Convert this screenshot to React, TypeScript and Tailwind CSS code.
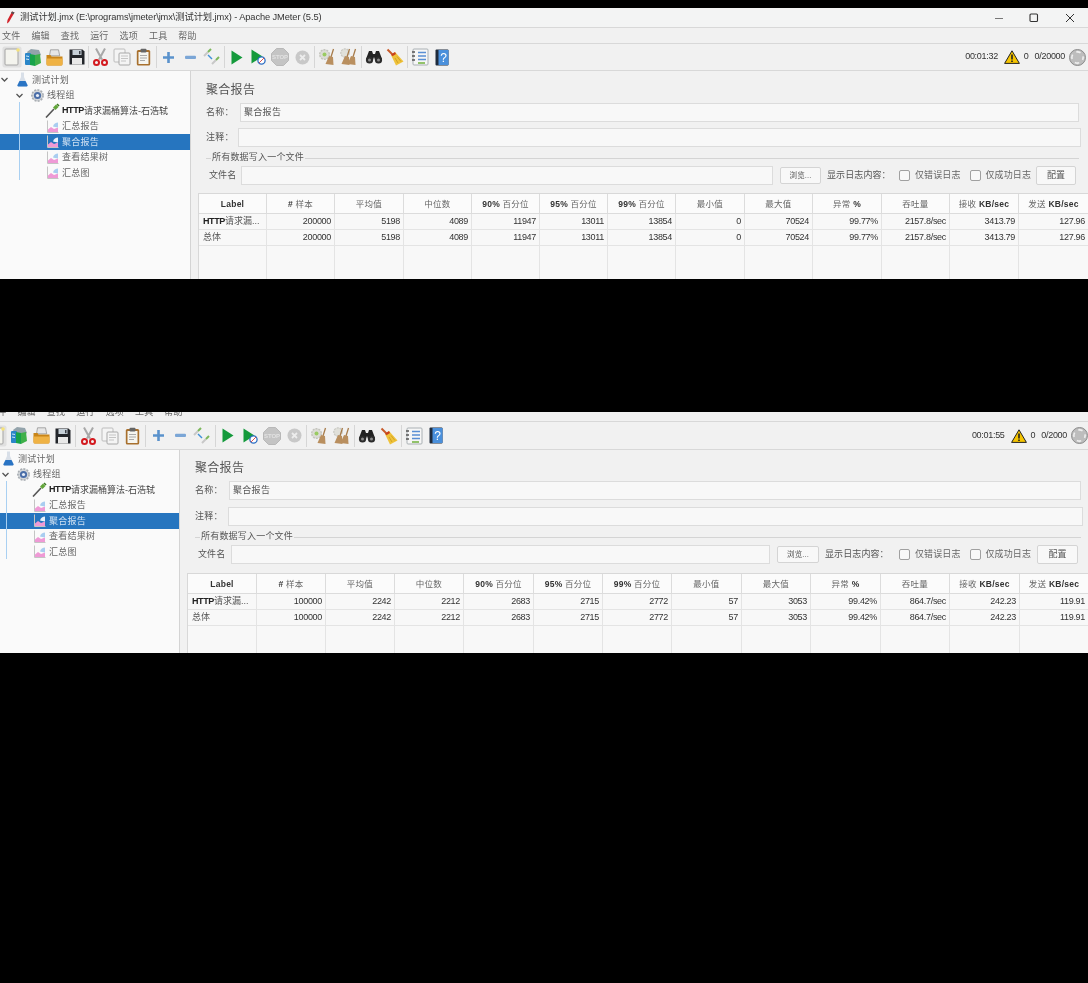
import type { ReactNode } from "react";

const cjk = { fontFamily: '"Liberation Sans", "Noto Sans CJK SC", sans-serif' };

const headers = ["Label", "# 样本", "平均值", "中位数", "90% 百分位", "95% 百分位", "99% 百分位", "最小值", "最大值", "异常 %", "吞吐量", "接收 KB/sec", "发送 KB/sec"];

function Bold({ text }: { text: string }) {
  // latin parts of the header are bold, the chinese parts are not
  return (
    <span>
      {text.split(/([\x21-\x7e]+)/).map((part, i) =>
        /[\x21-\x7e]/.test(part) ? <b key={i} className="font-bold text-[#333]">{part}</b> : <span key={i}>{part}</span>
      )}
    </span>
  );
}

function NewIcon() {
  return (
    <svg width="20" height="22" viewBox="0 0 20 22">
      <rect x="0.5" y="0.5" width="19" height="21" rx="2" fill="#e0e0e0" />
      <rect x="3" y="3" width="13" height="16" rx="1" fill="#f4f4ee" stroke="#a4a4a4" strokeWidth="1" />
      <circle cx="16" cy="4" r="1.8" fill="#f5e27a" />
    </svg>
  );
}
function TemplatesIcon() {
  return (
    <svg width="18" height="19" viewBox="0 0 18 19">
      <path d="M3 4l4-3 8 1 2 5-4 2-8-1z" fill="#93a3ab" />
      <rect x="1" y="5" width="6" height="12" rx="1" fill="#2a86c8" />
      <path d="M6 6l5 1v11l-5-1z" fill="#17a34a" />
      <path d="M11 7l5-1 1 9-6 3z" fill="#3fb04a" />
      <path d="M2 8l3 .5M2 11l3 .5" stroke="#cde7f7" />
    </svg>
  );
}
function OpenIcon() {
  return (
    <svg width="17" height="17" viewBox="0 0 17 17">
      <path d="M4.5 0.8h8l1.2 6H3.5z" fill="#e6e6e6" stroke="#8a8a8a" strokeWidth="0.7" />
      <path d="M0.5 6h4l1 1.5h11V15a1.5 1.5 0 0 1-1.5 1.5H2A1.5 1.5 0 0 1 .5 15z" fill="#c98518" />
      <path d="M0.5 9.5h16V15a1.5 1.5 0 0 1-1.5 1.5H2A1.5 1.5 0 0 1 .5 15z" fill="#efb244" />
    </svg>
  );
}
function SaveIcon() {
  return (
    <svg width="16" height="16" viewBox="0 0 16 16">
      <path d="M0.5 0.5h13l2 2v13H.5z" fill="#22252a" />
      <rect x="3.5" y="1" width="9" height="5" fill="#c6d0d8" />
      <rect x="3" y="9" width="10" height="6.5" fill="#e8e8e8" />
      <rect x="10" y="2" width="1.5" height="3.2" fill="#3a3f46" />
    </svg>
  );
}
function CutIcon() {
  return (
    <svg width="15" height="18" viewBox="0 0 15 18">
      <path d="M3 0.5l6 11M12 0.5L6 11.5" stroke="#a8a8a8" strokeWidth="2" />
      <circle cx="3.5" cy="14.5" r="2.5" fill="none" stroke="#d3191f" strokeWidth="2" />
      <circle cx="11.5" cy="14.5" r="2.5" fill="none" stroke="#d3191f" strokeWidth="2" />
    </svg>
  );
}
function CopyIcon() {
  return (
    <svg width="18" height="18" viewBox="0 0 18 18">
      <rect x="1" y="1" width="11" height="13" rx="1" fill="#f4f4f4" stroke="#bcbcbc" />
      <rect x="6" y="5" width="11" height="12" rx="1" fill="#f4f4f4" stroke="#a8a8a8" />
      <path d="M8 8h7M8 10.5h7M8 13h5" stroke="#c4c4c4" />
    </svg>
  );
}
function PasteIcon() {
  return (
    <svg width="15" height="18" viewBox="0 0 15 18">
      <rect x="0.8" y="2" width="13.4" height="15.5" rx="1.5" fill="#a8702e" />
      <rect x="2.5" y="4" width="10" height="12" fill="#f5f5f0" />
      <rect x="4.5" y="0.8" width="6" height="3.6" rx="1" fill="#666" />
      <path d="M4 7.5h7M4 10h7M4 12.5h5" stroke="#aaa" />
    </svg>
  );
}
function PlusIcon() {
  return (
    <svg width="13" height="13" viewBox="0 0 13 13">
      <path d="M6.5 1v11M1 6.5h11" stroke="#5a92cc" strokeWidth="2.6" />
    </svg>
  );
}
function MinusIcon() {
  return (
    <svg width="13" height="5" viewBox="0 0 13 5">
      <rect x="1" y="0.8" width="11" height="3.2" rx="1" fill="#7ba6d6" />
    </svg>
  );
}
function ToggleIcon() {
  return (
    <svg width="18" height="18" viewBox="0 0 18 18">
      <path d="M1 8l4-4" stroke="#c8c8c8" strokeWidth="2" />
      <path d="M5 4l3-3" stroke="#7db85c" strokeWidth="2" />
      <path d="M9 16l4-4" stroke="#c8c8c8" strokeWidth="2" />
      <path d="M13 12l3-3" stroke="#7db85c" strokeWidth="2" />
      <path d="M5 7l4 4" stroke="#3f8fd8" strokeWidth="1.4" />
    </svg>
  );
}
function PlayIcon() {
  return (
    <svg width="12" height="15" viewBox="0 0 12 15">
      <path d="M0.5 0.5L11.5 7.5L0.5 14.5z" fill="#159a3c" />
    </svg>
  );
}
function PlayNoIcon() {
  return (
    <svg width="15" height="16" viewBox="0 0 15 16">
      <path d="M0.5 0.5L11.5 7.5L0.5 14.5z" fill="#159a3c" />
      <circle cx="10.5" cy="11.5" r="3.6" fill="#fff" stroke="#2f6fc4" strokeWidth="1.3" />
      <path d="M8 14l5-5" stroke="#d9534f" strokeWidth="1" />
    </svg>
  );
}
function StopIcon() {
  return (
    <svg width="18" height="18" viewBox="0 0 18 18">
      <path d="M5.5 0.5h7l5 5v7l-5 5h-7l-5-5v-7z" fill="#c4c4c4" stroke="#b8b8b8" />
      <text x="9" y="11" fontSize="6" textAnchor="middle" fontWeight="700" fill="#e2e2e2" fontFamily="Liberation Sans, sans-serif">STOP</text>
    </svg>
  );
}
function ShutIcon() {
  return (
    <svg width="15" height="15" viewBox="0 0 15 15">
      <circle cx="7.5" cy="7.5" r="7" fill="#c8c8c8" />
      <path d="M5 5l5 5M10 5l-5 5" stroke="#ececec" strokeWidth="1.8" />
    </svg>
  );
}
function Brush({ x }: { x: number }) {
  return (
    <g transform={`translate(${x} 0)`}>
      <path d="M12.5 1L10 9" stroke="#a77b4a" strokeWidth="1.3" />
      <path d="M8 8l4 1 .5 8-8-1z" fill="#b98f5f" />
    </g>
  );
}
function ClearIcon() {
  return (
    <svg width="18" height="18" viewBox="0 0 18 18">
      <circle cx="6.5" cy="6.5" r="4.8" fill="#dcdcd6" stroke="#c4c4be" strokeWidth="1.4" strokeDasharray="2 1" />
      <circle cx="6.5" cy="6.5" r="2" fill="#9acb62" />
      <Brush x={3} />
    </svg>
  );
}
function ClearAllIcon() {
  return (
    <svg width="18" height="18" viewBox="0 0 18 18">
      <circle cx="6" cy="5" r="4.2" fill="#e0e0da" stroke="#c8c8c2" strokeWidth="1.2" strokeDasharray="2 1" />
      <Brush x={-2} />
      <Brush x={4} />
    </svg>
  );
}
function BinocularsIcon() {
  return (
    <svg width="18" height="14" viewBox="0 0 18 14">
      <path d="M4 1h3l1 3h2l1-3h3l3 8-7 1-1-3-1 3-7-1z" fill="#222" />
      <circle cx="4.5" cy="10" r="3.6" fill="#2b2b2b" />
      <circle cx="13.5" cy="10" r="3.6" fill="#2b2b2b" />
      <circle cx="4.5" cy="10" r="1.5" fill="#8c8c8c" />
      <circle cx="13.5" cy="10" r="1.5" fill="#8c8c8c" />
    </svg>
  );
}
function BroomIcon() {
  return (
    <svg width="18" height="18" viewBox="0 0 18 18">
      <path d="M1.5 1.5L7 7" stroke="#c85a2a" strokeWidth="2" />
      <path d="M5 7L9 4l8.5 9.5-7.5 4z" fill="#efc23a" />
      <path d="M5 6.5L9 4l1 2-3.5 2.3z" fill="#c8401f" />
      <path d="M9 10l3 5M11 8.5l4 5" stroke="#c99a1f" strokeWidth="0.8" />
    </svg>
  );
}
function FunctionIcon() {
  return (
    <svg width="18" height="18" viewBox="0 0 18 18">
      <rect x="2" y="1" width="15" height="16" rx="1" fill="#f6f6f6" stroke="#aab0b4" />
      <path d="M7 4.5h8M7 8h8M7 11.5h8" stroke="#5a8fd4" strokeWidth="1.6" />
      <path d="M7 15h7" stroke="#7ab648" strokeWidth="1.6" />
      <path d="M1 4h3M1 8h3M1 12h3" stroke="#555" strokeWidth="1.4" />
    </svg>
  );
}
function HelpIcon() {
  return (
    <svg width="14" height="17" viewBox="0 0 14 17">
      <rect x="0.5" y="0.5" width="13" height="16" rx="1" fill="#1f2b3c" />
      <rect x="3.5" y="1" width="10" height="15" fill="#4a90dc" />
      <text x="8.5" y="13" fontSize="12" textAnchor="middle" fill="#fff" fontFamily="Liberation Sans, sans-serif">?</text>
    </svg>
  );
}

function FlaskIcon() {
  return (
    <svg width="11" height="15" viewBox="0 0 11 15">
      <path d="M4 0.5h3v4.5l3.5 8a1 1 0 0 1-1 1.5h-8a1 1 0 0 1-1-1.5L4 5z" fill="#d8dfe8" />
      <path d="M2.5 9h6l2 4a1 1 0 0 1-1 1.5h-8a1 1 0 0 1-1-1.5z" fill="#2a74c4" />
    </svg>
  );
}
function GearIcon() {
  return (
    <svg width="15" height="15" viewBox="0 0 15 15">
      <circle cx="7.5" cy="7.5" r="5.6" fill="#d4d7da" stroke="#a8adb2" strokeWidth="1.6" strokeDasharray="2 1.2" />
      <circle cx="7.5" cy="7.5" r="3.6" fill="#4a6ea8" />
      <circle cx="7.5" cy="7.5" r="1.6" fill="#e8eef8" />
    </svg>
  );
}
function PipetteIcon() {
  return (
    <svg width="15" height="15" viewBox="0 0 15 15">
      <path d="M1 14.5L9 6" stroke="#555" strokeWidth="1.6" />
      <path d="M8 4.5l3-3 2.5 2.5-3 3z" fill="#62a63a" />
      <path d="M12 1l2 2" stroke="#3d7a22" strokeWidth="1.6" />
    </svg>
  );
}
function GraphIcon({ active }: { active?: boolean }) {
  return (
    <svg width="12" height="13" viewBox="0 0 12 13">
      <path d="M0.5 0.5v12h11" fill="none" stroke="#c4c4c4" />
      <path d="M1 12V9.5l3-2.5 3 2 4-1.5V12z" fill="#ef9ad6" />
      <path d="M6 6.5C6.5 4 9 2.5 11 2.5v5C9 7 7 7 6 6.5z" fill={active ? "#e8f2fc" : "#a9cdf0"} />
    </svg>
  );
}

function Sep({ w }: { w: string }) {
  return (
    <div className={`flex shrink-0 justify-center ${w}`}>
      <div className="h-[22px] w-px bg-[#d6d6d6]" />
    </div>
  );
}

function Toolbar({ cell, seps, className }: { cell: string; seps: string[]; className: string }) {
  const groups: ReactNode[][] = [
    [<NewIcon />, <TemplatesIcon />, <OpenIcon />, <SaveIcon />],
    [<CutIcon />, <CopyIcon />, <PasteIcon />],
    [<PlusIcon />, <MinusIcon />, <ToggleIcon />],
    [<PlayIcon />, <PlayNoIcon />, <StopIcon />, <ShutIcon />],
    [<ClearIcon />, <ClearAllIcon />],
    [<BinocularsIcon />, <BroomIcon />],
    [<FunctionIcon />, <HelpIcon />],
  ];
  return (
    <div className={`flex items-center ${className}`}>
      {groups.map((icons, g) => (
        <div key={g} className="flex shrink-0 items-center">
          {g > 0 && <Sep w={seps[g - 1]} />}
          {icons.map((icon, i) => (
            <div key={i} className={`flex shrink-0 items-center justify-center ${cell}`}>{icon}</div>
          ))}
        </div>
      ))}
    </div>
  );
}

function Status({ time, threads, className }: { time: string; threads: string; className?: string }) {
  return (
    <div className={`ml-auto flex items-center text-[9px] tracking-[-0.3px] text-[#333] ${className ?? ""}`}>
      <span>{time}</span>
      <svg className="ml-[6px]" width="16" height="14" viewBox="0 0 16 14">
        <path d="M8 0.8L15.4 13.4H0.6z" fill="#f5c400" stroke="#222" strokeWidth="1" strokeLinejoin="round" />
        <path d="M8 4.5v5M8 10.5v1.6" stroke="#222" strokeWidth="1.6" />
      </svg>
      <span className="ml-[4px]">0</span>
      <span className="ml-[6px]">{threads}</span>
      <svg className="ml-[4px]" width="17" height="17" viewBox="0 0 17 17">
        <circle cx="8.5" cy="8.5" r="8" fill="#bdbdbd" stroke="#8c8c8c" />
        <circle cx="8.5" cy="8.5" r="5.6" fill="none" stroke="#efefef" strokeWidth="1.6" strokeDasharray="4.5 4.3" strokeDashoffset="2" />
      </svg>
    </div>
  );
}

function TreeRow({ label, icon, chevron, indent, selected, latin }: { label: string; icon: ReactNode; chevron?: boolean; indent: string; selected?: boolean; latin?: string }) {
  return (
    <div className={`flex h-[15.5px] items-center whitespace-nowrap text-[9px] ${latin ? "" : "tracking-[0.25px]"} ${selected ? "bg-[#2675bf] text-[#cfe0f2]" : "text-[#666]"} ${indent}`}>
      {chevron && (
        <svg className="mr-[5px] ml-[-14px] shrink-0" width="9" height="9" viewBox="0 0 9 9">
          <path d="M1.5 3l3 3 3-3" fill="none" stroke="#555" strokeWidth="1.3" />
        </svg>
      )}
      <span className="mr-px flex w-[17px] shrink-0 justify-center">{icon}</span>
      {latin && <b className="font-bold tracking-[-0.4px] text-[#222]">{latin}</b>}
      <span className={`pt-px ${latin ? "text-[#444]" : ""}`}>{label}</span>
    </div>
  );
}

function Tree({ pane, a, b, c, line, rootChevron }: { pane: string; a: string; b: string; c: string; line: string; rootChevron?: boolean }) {
  return (
    <div className={`relative shrink-0 border-r border-[#d4d4d4] bg-[#fafafa] pt-px ${pane}`}>
      <TreeRow label="测试计划" icon={<FlaskIcon />} chevron={rootChevron} indent={a} />
      <TreeRow label="线程组" icon={<GearIcon />} chevron indent={b} />
      <TreeRow label="请求漏桶算法-石浩轼" latin="HTTP" icon={<PipetteIcon />} indent={c} />
      <TreeRow label="汇总报告" icon={<GraphIcon />} indent={c} />
      <TreeRow label="聚合报告" icon={<GraphIcon active />} indent={c} selected />
      <TreeRow label="查看结果树" icon={<GraphIcon />} indent={c} />
      <TreeRow label="汇总图" icon={<GraphIcon />} indent={c} />
      <div className={`absolute top-[31px] h-[78px] w-px bg-[#a9d0f2] ${line}`} />
    </div>
  );
}

function Field({ className, children }: { className: string; children?: ReactNode }) {
  return <div className={`h-[19px] border border-[#dcdcdc] bg-[#f8f8f8] ${className}`}>{children}</div>;
}

function Check({ label, className }: { label: string; className: string }) {
  return (
    <div className={`flex shrink-0 items-center ${className}`}>
      <div className="h-[11px] w-[11px] rounded-[2px] border border-[#a0a0a0] bg-[#f8f8f8]" />
      <span className="ml-[5px] whitespace-nowrap text-[9px] tracking-[0.1px] text-[#666]">{label}</span>
    </div>
  );
}

function Table({ rows, cols, className }: { rows: string[]; cols: string; className: string }) {
  return (
    <div className={`flex flex-col border-t border-l border-[#d8d8d8] bg-[#f8f8f8] ${className}`}>
      <div className={`grid h-[20px] shrink-0 bg-[#fbfbfb] ${cols}`}>
        {headers.map((h) => (
          <div key={h} className="flex items-center justify-center overflow-hidden whitespace-nowrap border-r border-b border-[#dcdcdc] pt-px text-[8.5px] tracking-[0.25px] text-[#666]">
            <Bold text={h} />
          </div>
        ))}
      </div>
      {["HTTP", "总体"].map((name) => (
        <div key={name} className={`grid h-[16px] shrink-0 ${cols}`}>
          <div className="flex items-center overflow-hidden whitespace-nowrap border-r border-b border-[#e4e4e4] pl-[4px] text-[9px] text-[#555]">
            {name === "HTTP" ? (<span><b className="font-bold tracking-[-0.4px] text-[#222]">HTTP</b>请求漏...</span>) : name}
          </div>
          {rows.map((v, i) => (
            <div key={i} className="flex items-center justify-end overflow-hidden whitespace-nowrap border-r border-b border-[#e4e4e4] pr-[3px] text-[9px] tracking-[-0.3px] text-[#333]">{v}</div>
          ))}
        </div>
      ))}
      <div className={`grid min-h-0 flex-1 ${cols}`}>
        {headers.map((h) => (
          <div key={h} className="border-r border-[#e4e4e4]" />
        ))}
      </div>
    </div>
  );
}

function Button({ children, className }: { children: ReactNode; className: string }) {
  return <div className={`flex shrink-0 items-center justify-center rounded-[2px] border border-[#d4d4d4] bg-[#f8f8f8] ${className}`}>{children}</div>;
}

const menus = ["文件", "编辑", "查找", "运行", "选项", "工具", "帮助"];

function Menu({ className, box }: { className: string; box: string }) {
  return (
    <div className={`overflow-hidden border-b border-[#d8d8d8] ${box}`}>
      <div className={`flex text-[9px] text-[#666] ${className}`}>
        {menus.map((m) => (
          <span key={m} className="w-[29.4px] shrink-0 tracking-[0.2px]">{m}</span>
        ))}
      </div>
    </div>
  );
}

export default function App() {
  return (
    <div className="flex h-[983px] w-[1088px] flex-col overflow-hidden bg-black text-[9px] blur-[0.35px]" style={cjk}>
      {/* first run, 20000 threads */}
      <div className="mt-[8px] flex h-[271px] shrink-0 flex-col bg-[#f1f1f1]">
        <div className="flex h-[20px] shrink-0 items-center border-b border-[#d8d8d8] bg-[#f3f4f4] pl-[6px]">
          <svg width="9" height="13" viewBox="0 0 9 13">
            <path d="M6 0.5l2.5 1L3 11 1 12.5 1.5 9z" fill="#d2232a" />
            <path d="M6 0.5l2.5 1-1 1.7L5 2z" fill="#555" />
          </svg>
          <span className="ml-[5px] whitespace-nowrap text-[9.3px] tracking-[-0.1px] text-[#333]">测试计划.jmx (E:\programs\jmeter\jmx\测试计划.jmx) - Apache JMeter (5.5)</span>
          <div className="ml-auto flex items-center pr-[13px]">
            <svg width="10" height="10" viewBox="0 0 10 10"><path d="M1 5.5h8" stroke="#777" /></svg>
            <svg className="ml-[25px]" width="10" height="10" viewBox="0 0 10 10"><rect x="1" y="1" width="7.5" height="7.5" rx="1" fill="none" stroke="#333" strokeWidth="1.1" /></svg>
            <svg className="ml-[26px]" width="10" height="10" viewBox="0 0 10 10"><path d="M1 1l8 8M9 1L1 9" stroke="#333" strokeWidth="1" /></svg>
          </div>
        </div>
        <Menu box="h-[16px] shrink-0" className="pt-[2px] pl-[2px]" />
        <div className="flex h-[27px] shrink-0 items-center border-b border-[#d8d8d8]">
          <Toolbar cell="w-[21.6px]" seps={["w-[2.5px]", "w-[3.5px]", "w-[3.5px]", "w-[3px]", "w-[4px]", "w-[3.5px]"]} className="pl-[1px]" />
          <Status time="00:01:32" threads="0/20000" className="pr-[2px]" />
        </div>
        <div className="flex min-h-0 flex-1">
          <Tree pane="w-[191px]" a="pl-[14px]" b="pl-[29px]" c="pl-[44px]" line="left-[19px]" rootChevron />
          <div className="flex w-[897px] flex-col pl-[7px]">
            <div className="flex flex-col pl-[8px] pt-[9px] pr-[9px] text-[#555]">
              <div className="flex h-[18px] items-center pt-px text-[12px] tracking-[0.3px]">聚合报告</div>
              <div className="mt-[5px] flex items-center tracking-[0.3px]">
                <span className="w-[34px] shrink-0 pt-px">名称：</span>
                <Field className="flex flex-1 items-center pl-[3px] pt-px">聚合报告</Field>
              </div>
              <div className="mt-[6px] flex items-center tracking-[0.3px]">
                <span className="w-[32px] shrink-0 pt-px">注释：</span>
                <Field className="mr-[-2px] flex-1" />
              </div>
              <div className="mt-[4px] flex h-[14px] items-center tracking-[0.2px]">
                <div className="h-px w-[5px] bg-[#d4d4d4]" />
                <span className="px-[1px] whitespace-nowrap">所有数据写入一个文件</span>
                <div className="h-px flex-1 bg-[#d4d4d4]" />
              </div>
              <div className="mt-[1px] flex items-center tracking-[0.1px]">
                <span className="w-[35px] shrink-0 whitespace-nowrap pl-[3px] pt-px">文件名</span>
                <Field className="w-[532px] shrink-0" />
                <Button className="ml-[7px] h-[17px] w-[41px] text-[7.5px]">浏览...</Button>
                <span className="ml-[6px] w-[60px] shrink-0 whitespace-nowrap pt-px">显示日志内容：</span>
                <Check label="仅错误日志" className="ml-[12px]" />
                <Check label="仅成功日志" className="ml-[9px]" />
                <Button className="ml-[5px] h-[19px] w-[40px]">配置</Button>
              </div>
            </div>
            <Table
              rows={["200000", "5198", "4089", "11947", "13011", "13854", "0", "70524", "99.77%", "2157.8/sec", "3413.79", "127.96"]}
              cols="grid-cols-[68px_68px_69px_68px_68px_68px_68px_69px_68px_69px_68px_69px_70px]"
              className="mt-[8px] min-h-0 flex-1"
            />
          </div>
        </div>
      </div>

      {/* second run, 2000 threads, the top of the window is cut off */}
      <div className="mt-[133px] flex h-[241px] shrink-0 flex-col bg-[#f1f1f1]">
        <Menu box="h-[10px] shrink-0" className="mt-[-6px] ml-[-12px]" />
        <div className="flex h-[28px] shrink-0 items-center overflow-hidden border-b border-[#d8d8d8]">
          <Toolbar cell="w-[22px]" seps={["w-[3px]", "w-[4px]", "w-[4px]", "w-[3px]", "w-[4px]", "w-[3px]"]} className="ml-[-14px]" />
          <Status time="00:01:55" threads="0/2000" />
        </div>
        <div className="flex min-h-0 flex-1">
          <Tree pane="w-[180px]" a="pl-[0px]" b="pl-[15px]" c="pl-[31px]" line="left-[6px]" />
          <div className="flex w-[908px] flex-col pl-[7px]">
            <div className="flex flex-col pl-[8px] pt-[8px] pr-[7px] text-[#555]">
              <div className="flex h-[18px] items-center pt-px text-[12px] tracking-[0.3px]">聚合报告</div>
              <div className="mt-[5px] flex items-center tracking-[0.3px]">
                <span className="w-[34px] shrink-0 pt-px">名称：</span>
                <Field className="flex flex-1 items-center pl-[3px] pt-px">聚合报告</Field>
              </div>
              <div className="mt-[7px] flex items-center tracking-[0.3px]">
                <span className="w-[33px] shrink-0 pt-px">注释：</span>
                <Field className="mr-[-2px] flex-1" />
              </div>
              <div className="mt-[4px] flex h-[14px] items-center tracking-[0.2px]">
                <div className="h-px w-[5px] bg-[#d4d4d4]" />
                <span className="px-[1px] whitespace-nowrap">所有数据写入一个文件</span>
                <div className="h-px flex-1 bg-[#d4d4d4]" />
              </div>
              <div className="mt-[1px] flex items-center tracking-[0.1px]">
                <span className="w-[36px] shrink-0 whitespace-nowrap pl-[3px] pt-px">文件名</span>
                <Field className="w-[539px] shrink-0" />
                <Button className="ml-[7px] h-[17px] w-[42px] text-[7.5px]">浏览...</Button>
                <span className="ml-[6px] w-[60px] shrink-0 whitespace-nowrap pt-px">显示日志内容：</span>
                <Check label="仅错误日志" className="ml-[14px]" />
                <Check label="仅成功日志" className="ml-[9px]" />
                <Button className="ml-[6px] h-[19px] w-[41px]">配置</Button>
              </div>
            </div>
            <Table
              rows={["100000", "2242", "2212", "2683", "2715", "2772", "57", "3053", "99.42%", "864.7/sec", "242.23", "119.91"]}
              cols="grid-cols-[69px_69px_69px_69px_70px_69px_69px_70px_69px_70px_69px_70px_69px]"
              className="mt-[9px] min-h-0 flex-1"
            />
          </div>
        </div>
      </div>
    </div>
  );
}
